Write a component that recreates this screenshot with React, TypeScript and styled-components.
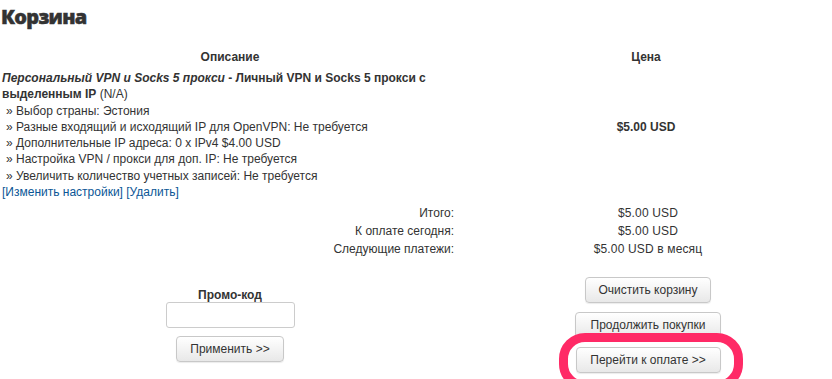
import React from 'react';
import styled, { createGlobalStyle } from 'styled-components';

const GlobalStyle = createGlobalStyle`
  html, body {
    margin: 0;
    padding: 0;
    background: #fff;
  }
  body {
    font-family: "Liberation Sans", Arial, sans-serif;
    font-size: 12px;
    color: #333;
  }
`;

const options = [
  'Выбор страны: Эстония',
  'Разные входящий и исходящий IP для OpenVPN: Не требуется',
  'Дополнительные IP адреса: 0 x IPv4 $4.00 USD',
  'Настройка VPN / прокси для доп. IP: Не требуется',
  'Увеличить количество учетных записей: Не требуется',
];

const totals = [
  { label: 'Итого:', value: '$5.00 USD' },
  { label: 'К оплате сегодня:', value: '$5.00 USD' },
  { label: 'Следующие платежи:', value: '$5.00 USD в месяц' },
];

export default function App() {
  return (
    <Page>
      <GlobalStyle />
      <Title>Корзина</Title>
      <CartTable>
        <thead>
          <tr>
            <Th $w={460}>Описание</Th>
            <Th>Цена</Th>
          </tr>
        </thead>
        <tbody>
          <tr>
            <DescCell>
              <ProductName>
                <em>Персональный VPN и Socks 5 прокси</em> - Личный VPN и Socks 5 прокси с
                выделенным IP
              </ProductName>{' '}
              (N/A)
              <Options>
                {options.map((o) => (
                  <li key={o}>» {o}</li>
                ))}
              </Options>
            </DescCell>
            <PriceCell>$5.00 USD</PriceCell>
          </tr>
          <tr>
            <LinkCell colSpan={2}>
              <CartLink href="#">[Изменить настройки]</CartLink>{' '}
              <CartLink href="#">[Удалить]</CartLink>
            </LinkCell>
          </tr>
        </tbody>
      </CartTable>

      <Totals>
        {totals.map((t) => (
          <React.Fragment key={t.label}>
            <TotalLabel>{t.label}</TotalLabel>
            <TotalValue>{t.value}</TotalValue>
          </React.Fragment>
        ))}
      </Totals>

      <Bottom>
        <PromoBox>
          <PromoTitle>Промо-код</PromoTitle>
          <PromoInput type="text" />
          <Button $w={108}>Применить &gt;&gt;</Button>
        </PromoBox>
        <Actions>
          <Button $w={126}>Очистить корзину</Button>
          <Button $w={146}>Продолжить покупки</Button>
          <Highlight>
            <Button $w={145}>Перейти к оплате &gt;&gt;</Button>
          </Highlight>
        </Actions>
      </Bottom>
    </Page>
  );
}

const Page = styled.div`
  width: 832px;
  height: 379px;
  overflow: hidden;
`;

const Title = styled.h1`
  margin: 0;
  padding: 4px 0 0 1px;
  height: 30px;
  font-family: "Open Sans", sans-serif;
  font-size: 20px;
  font-weight: 800;
  line-height: 26px;
  color: #333;
  letter-spacing: -0.7px;
  -webkit-text-stroke: 0.5px #333;
`;

const CartTable = styled.table`
  width: 832px;
  border-collapse: collapse;
  margin-top: 14px;
`;

const Th = styled.th<{ $w?: number }>`
  width: ${(p) => (p.$w ? `${p.$w}px` : 'auto')};
  padding: 0 0 4px;
  font-weight: 700;
  font-size: 12px;
  line-height: 18px;
  color: #333;
  text-align: center;
`;

const DescCell = styled.td`
  padding: 0 0 0 2px;
  font-size: 12px;
  line-height: 16.3px;
  vertical-align: top;
  color: #333;
`;

const ProductName = styled.strong`
  font-weight: 700;
  em {
    font-style: italic;
  }
`;

const Options = styled.ul`
  list-style: none;
  margin: 0;
  padding: 0 0 0 4px;
`;

const PriceCell = styled.td`
  text-align: center;
  vertical-align: middle;
  font-weight: 700;
  font-size: 12px;
  color: #333;
`;

const LinkCell = styled.td`
  padding: 0 0 0 2px;
  line-height: 16px;
`;

const CartLink = styled.a`
  color: #0a5696;
  text-decoration: none;
`;

const Totals = styled.div`
  display: grid;
  grid-template-columns: 454px 378px;
  row-gap: 1px;
  margin-top: 5px;
  line-height: 16.8px;
  color: #333;
`;

const TotalLabel = styled.div`
  text-align: right;
`;

const TotalValue = styled.div`
  text-align: center;
  padding-left: 10px;
  letter-spacing: 0.15px;
`;

const Bottom = styled.div`
  display: grid;
  grid-template-columns: 460px 372px;
  margin-top: 20px;
`;

const PromoBox = styled.div`
  display: flex;
  flex-direction: column;
  align-items: center;
  padding-top: 11px;
`;

const PromoTitle = styled.div`
  font-weight: 700;
  font-size: 12px;
  line-height: 14px;
`;

const PromoInput = styled.input`
  box-sizing: border-box;
  width: 129px;
  height: 26px;
  border: 1px solid #ccc;
  border-radius: 3px;
  margin: 0 0 8px;
  padding: 0 6px;
  font: inherit;
`;

const Actions = styled.div`
  display: flex;
  flex-direction: column;
  align-items: center;
  gap: 9px;
  padding-left: 4px;
`;

const Button = styled.button<{ $w: number }>`
  box-sizing: border-box;
  width: ${(p) => p.$w}px;
  height: 26px;
  padding: 0;
  border: 1px solid #c8c8c8;
  border-radius: 4px;
  background: linear-gradient(#ffffff, #e8e8e8);
  box-shadow: 0 1px 1px rgba(0, 0, 0, 0.08);
  font-family: "Liberation Sans", Arial, sans-serif;
  font-size: 12px;
  color: #333;
  cursor: pointer;
`;

const Highlight = styled.div`
  position: relative;
  &::before {
    content: '';
    position: absolute;
    left: -17px;
    right: -22px;
    top: -14px;
    bottom: -17px;
    border: 9px solid #ff2a66;
    border-radius: 26px;
    pointer-events: none;
  }
`;
